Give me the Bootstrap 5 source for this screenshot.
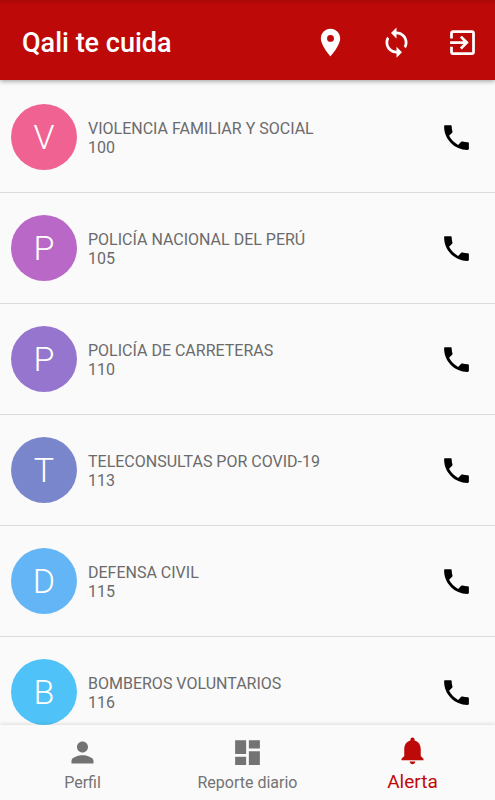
<!DOCTYPE html>
<html lang="es">
<head>
<meta charset="utf-8">
<meta name="viewport" content="width=device-width, initial-scale=1">
<title>Qali te cuida</title>
<link href="https://cdn.jsdelivr.net/npm/bootstrap@5.3.0/dist/css/bootstrap.min.css" rel="stylesheet">
<style>
  body { font-family: Roboto, sans-serif; background: #fafafa; color: #6b6b6b; }
  .icon { width: 33px; height: 33px; fill: currentColor; flex: none; }
  .app-bar { background: linear-gradient(#a90809, #be0909 5px); padding: 4px 0 0 22px; min-height: 80px; box-shadow: 0 1px 5px rgba(0, 0, 0, .4); }
  .app-title { font-size: 27px; font-weight: 500; line-height: 32px; padding-top: 2px; }
  .app-action { width: 66px; height: 66px; color: #fff; }
  .contacts { padding-top: 2px; scrollbar-width: none; }
  .contacts::-webkit-scrollbar { display: none; }
  .contact { padding: 22px 22px 22px 11px; gap: 11px; border-bottom: 1px solid #dadada; }
  .avatar { width: 66px; height: 66px; font-size: 34px; font-weight: 300; color: #fff; flex: none; }
  .contact-text { font-size: 16px; line-height: 19px; padding-top: 2px; }
  .call { color: #000; }
  .pink { background: #f06292; }
  .purple { background: #ba68c8; }
  .violet { background: #9575cd; }
  .indigo { background: #7986cb; }
  .blue { background: #64b5f6; }
  .sky { background: #4fc3f7; }
  .tabs { background: #fafafa; box-shadow: 0 -1px 4px rgba(0, 0, 0, .12); }
  .tab { color: #737373; font-size: 16px; line-height: 20px; padding: 11px 0 7px; gap: 4px; }
  .tab.active { color: #be0909; font-size: 19px; padding-top: 9px; gap: 5px; }
</style>
<script src="https://cdn.jsdelivr.net/npm/bootstrap@5.3.0/dist/js/bootstrap.bundle.min.js" defer></script>
</head>
<body>
<svg class="d-none" aria-hidden="true">
  <symbol id="phone" viewBox="0 0 24 24"><path d="M6.620 10.790c1.440 2.830 3.760 5.140 6.590 6.590l2.200-2.200c.27-.27.67-.36 1.020-.24 1.120.37 2.330.57 3.570.57.55 0 1 .2 1 .6V20.400c0 .4-.45.600-1 .6C10.610 21 3 13.390 3 4c0-.7.2-1 .6-1h4.300c.4 0 .6.450.6 1 0 1.250.2 2.450.57 3.570.11.350.03.740-.25 1.020z"/></symbol>
</svg>
<div class="d-flex flex-column vh-100">
  <header class="app-bar d-flex align-items-center position-relative z-2 text-white">
    <h1 class="app-title mb-0 me-auto">Qali te cuida</h1>
    <button type="button" class="app-action btn p-0 border-0" aria-label="Ubicación"><svg class="icon" viewBox="0 0 24 24"><path d="M12 2C8.130 2 5 5.130 5 9c0 5.250 7 13 7 13s7-7.750 7-13c0-3.870-3.130-7-7-7zm0 9.500a2.500 2.500 0 0 1 0-5 2.500 2.500 0 0 1 0 5z"/></svg></button>
    <button type="button" class="app-action btn p-0 border-0" aria-label="Actualizar"><svg class="icon" viewBox="0 0 24 24"><path d="M12 4V1L8 5l4 4V6c3.310 0 6 2.690 6 6 0 1.010-.25 1.970-.7 2.800l1.460 1.460C19.540 15.030 20 13.570 20 12c0-4.420-3.580-8-8-8zm0 14c-3.310 0-6-2.690-6-6 0-1.010.25-1.970.7-2.800L5.240 7.740C4.460 8.970 4 10.430 4 12c0 4.420 3.580 8 8 8v3l4-4-4-4v3z"/></svg></button>
    <button type="button" class="app-action btn p-0 border-0" aria-label="Salir"><svg class="icon" viewBox="0 0 24 24"><path d="M10.090 15.590L11.500 17l5-5-5-5-1.410 1.410L12.670 11H3v2h9.670zM19 3H5c-1.110 0-2 .9-2 2v4h2V5h14v14H5v-4H3v4c0 1.100.89 2 2 2h14c1.100 0 2-.9 2-2V5c0-1.100-.9-2-2-2z"/></svg></button>
  </header>

  <main class="contacts flex-fill overflow-auto">
    <ul class="list-unstyled mb-0">
      <li class="contact d-flex align-items-center">
        <span class="avatar pink rounded-circle d-flex align-items-center justify-content-center" aria-hidden="true">V</span>
        <div class="contact-text me-auto"><div>VIOLENCIA FAMILIAR Y SOCIAL</div><div>100</div></div>
        <a class="call d-flex" href="tel:100" aria-label="Llamar al 100"><svg class="icon"><use href="#phone"/></svg></a>
      </li>
      <li class="contact d-flex align-items-center">
        <span class="avatar purple rounded-circle d-flex align-items-center justify-content-center" aria-hidden="true">P</span>
        <div class="contact-text me-auto"><div>POLICÍA NACIONAL DEL PERÚ</div><div>105</div></div>
        <a class="call d-flex" href="tel:105" aria-label="Llamar al 105"><svg class="icon"><use href="#phone"/></svg></a>
      </li>
      <li class="contact d-flex align-items-center">
        <span class="avatar violet rounded-circle d-flex align-items-center justify-content-center" aria-hidden="true">P</span>
        <div class="contact-text me-auto"><div>POLICÍA DE CARRETERAS</div><div>110</div></div>
        <a class="call d-flex" href="tel:110" aria-label="Llamar al 110"><svg class="icon"><use href="#phone"/></svg></a>
      </li>
      <li class="contact d-flex align-items-center">
        <span class="avatar indigo rounded-circle d-flex align-items-center justify-content-center" aria-hidden="true">T</span>
        <div class="contact-text me-auto"><div>TELECONSULTAS POR COVID-19</div><div>113</div></div>
        <a class="call d-flex" href="tel:113" aria-label="Llamar al 113"><svg class="icon"><use href="#phone"/></svg></a>
      </li>
      <li class="contact d-flex align-items-center">
        <span class="avatar blue rounded-circle d-flex align-items-center justify-content-center" aria-hidden="true">D</span>
        <div class="contact-text me-auto"><div>DEFENSA CIVIL</div><div>115</div></div>
        <a class="call d-flex" href="tel:115" aria-label="Llamar al 115"><svg class="icon"><use href="#phone"/></svg></a>
      </li>
      <li class="contact d-flex align-items-center">
        <span class="avatar sky rounded-circle d-flex align-items-center justify-content-center" aria-hidden="true">B</span>
        <div class="contact-text me-auto"><div>BOMBEROS VOLUNTARIOS</div><div>116</div></div>
        <a class="call d-flex" href="tel:116" aria-label="Llamar al 116"><svg class="icon"><use href="#phone"/></svg></a>
      </li>
    </ul>
  </main>

  <nav class="tabs row g-0 position-relative z-2" aria-label="Secciones">
    <a class="tab col d-flex flex-column align-items-center text-decoration-none" href="#perfil">
      <svg class="icon" viewBox="0 0 24 24"><path d="M12 12c2.210 0 4-1.790 4-4s-1.790-4-4-4-4 1.790-4 4 1.790 4 4 4zm0 2c-2.670 0-8 1.340-8 4v2h16v-2c0-2.660-5.330-4-8-4z"/></svg>
      Perfil
    </a>
    <a class="tab col d-flex flex-column align-items-center text-decoration-none" href="#reporte">
      <svg class="icon" viewBox="0 0 24 24"><path d="M3 13h8V3H3v10zm0 8h8v-6H3v6zm10 0h8V11h-8v10zm0-18v6h8V3h-8z"/></svg>
      Reporte diario
    </a>
    <a class="tab active col d-flex flex-column align-items-center text-decoration-none" href="#alerta" aria-current="page">
      <svg class="icon" viewBox="0 0 24 24"><path d="M12 22c1.100 0 2-.9 2-2h-4c0 1.100.89 2 2 2zm6-6v-5c0-3.070-1.640-5.640-4.500-6.320V4c0-.83-.67-1.500-1.500-1.500s-1.500.67-1.500 1.500v.68C7.630 5.360 6 7.920 6 11v5l-2 2v1h16v-1z"/></svg>
      Alerta
    </a>
  </nav>
</div>
</body>
</html>
